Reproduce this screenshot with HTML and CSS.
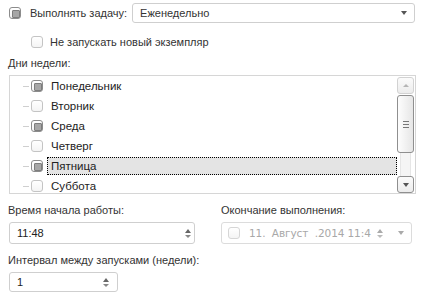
FILE: index.html
```html
<!DOCTYPE html>
<html lang="ru">
<head>
<meta charset="utf-8">
<link rel="stylesheet" href="styles.css">
</head>
<body>
<div class="form">
  <div class="row-top">
    <span class="cb checked"></span>
    <span class="lbl">Выполнять задачу:</span>
    <div class="combo">
      <span class="combo-text">Еженедельно</span>
      <span class="arrow-down"></span>
    </div>
  </div>
  <div class="row-sub">
    <span class="cb"></span>
    <span class="lbl">Не запускать новый экземпляр</span>
  </div>
  <div class="caption">Дни недели:</div>
  <div class="list">
    <div class="items">
      <div class="item"><span class="dash"></span><span class="cb checked"></span><span class="item-text">Понедельник</span></div>
      <div class="item"><span class="dash"></span><span class="cb"></span><span class="item-text">Вторник</span></div>
      <div class="item"><span class="dash"></span><span class="cb checked"></span><span class="item-text">Среда</span></div>
      <div class="item"><span class="dash"></span><span class="cb"></span><span class="item-text">Четверг</span></div>
      <div class="item selected"><span class="dash"></span><span class="cb checked"></span><span class="item-text">Пятница</span></div>
      <div class="item"><span class="dash"></span><span class="cb"></span><span class="item-text">Суббота</span></div>
    </div>
    <div class="scrollbar">
      <div class="sb-btn"><span class="sb-up"></span></div>
      <div class="sb-thumb"><span class="grip"></span><span class="grip"></span><span class="grip"></span></div>
      <div class="sb-track"></div>
      <div class="sb-btn dark"><span class="arrow-down"></span></div>
    </div>
  </div>
  <div class="cols">
    <div class="col">
      <div class="caption2">Время начала работы:</div>
      <div class="field time">
        <span class="field-text">11:48</span>
        <span class="spin"><span class="s-up"></span><span class="s-down"></span></span>
      </div>
    </div>
    <div class="col">
      <div class="caption2">Окончание выполнения:</div>
      <div class="field disabled">
        <span class="cb dis"></span>
        <span class="date-text">11.  Август  .2014 11:4</span>
        <span class="spin light"><span class="s-up"></span><span class="s-down"></span></span>
        <span class="arrow-down light"></span>
      </div>
    </div>
  </div>
  <div class="caption2 gap">Интервал между запусками (недели):</div>
  <div class="field small">
    <span class="field-text">1</span>
    <span class="spin"><span class="s-up"></span><span class="s-down"></span></span>
  </div>
</div>
</body>
</html>
```
FILE: styles.css
```css
* { box-sizing: border-box; }
html, body { margin: 0; padding: 0; background: #fff; }
body {
  width: 422px;
  height: 305px;
  overflow: hidden;
  font-family: "Liberation Sans", Arial, sans-serif;
  font-size: 11px;
  color: #333;
}
.form { padding: 0 6px 0 8px; }

.cb {
  display: inline-block;
  flex: none;
  width: 12px;
  height: 12px;
  border: 1px solid #c4c4c4;
  border-radius: 3px;
  background: linear-gradient(#fff, #f4f4f4);
  position: relative;
}
.cb.checked { border-color: #8c8c8c; }
.cb.checked::after {
  content: "";
  position: absolute;
  left: 2px; top: 2px;
  width: 6px; height: 6px;
  background: #a6a6a6;
  border: 1px solid #7d7d7d;
  border-radius: 1px;
}
.cb.dis { border-color: #d6d6d6; }

.row-top {
  display: flex;
  align-items: center;
  height: 20px;
  margin-top: 3px;
}
.row-top .cb { margin-left: 1px; margin-right: 9px; }
.row-top .lbl { white-space: nowrap; }
.combo {
  flex: 1;
  margin-left: 5px;
  margin-right: 1px;
  height: 20px;
  border: 1px solid #cfcfcf;
  border-radius: 3px;
  display: flex;
  align-items: center;
  padding: 0 7px 0 7px;
}
.combo-text { flex: 1; color: #333; }

.arrow-down {
  display: inline-block;
  width: 0; height: 0;
  border-left: 3.5px solid transparent;
  border-right: 3.5px solid transparent;
  border-top: 4px solid #555;
}
.arrow-down.light { border-top-color: #aaa; }

.row-sub {
  display: flex;
  align-items: center;
  height: 20px;
  margin-top: 9px;
}
.row-sub .cb { margin-left: 23px; margin-right: 7px; }

.caption {
  margin-top: 4px;
  line-height: 14px;
  height: 14px;
}

.list {
  margin-top: 5px;
  height: 119px;
  border: 1px solid #d6d6d6;
  margin-left: 1px;
  display: flex;
  position: relative;
}
.items { flex: 1; overflow: hidden; }
.item {
  height: 20px;
  display: flex;
  align-items: center;
  position: relative;
  color: #222;
  font-size: 11.5px;
}
.dash {
  width: 6px;
  height: 1px;
  background: #cfcfcf;
  margin-left: 13px;
  margin-right: 2px;
}
.item .cb { margin-right: 7px; }
.item-text { padding: 2px 2px 2px 1px; }
.item.selected::before {
  content: "";
  position: absolute;
  left: 37px; right: 0;
  top: 1px; bottom: 1px;
  background: #e4e4e4;
  border: 1px dotted #000;
}
.item.selected > * { position: relative; }

.scrollbar {
  width: 17px;
  margin: 1px 1px 0 0;
  display: flex;
  flex-direction: column;
}
.sb-btn {
  height: 17px;
  border: 1px solid #d2d2d2;
  border-radius: 3px;
  background: linear-gradient(#fbfbfb, #ececec);
  display: flex;
  align-items: center;
  justify-content: center;
}
.sb-btn.dark { border-color: #8f8f8f; }
.sb-up {
  width: 0; height: 0;
  border-left: 3px solid transparent;
  border-right: 3px solid transparent;
  border-bottom: 3px solid #b5b5b5;
}
.sb-thumb {
  margin-top: 1px;
  height: 58px;
  border: 1px solid #8f8f8f;
  border-radius: 3px;
  background: linear-gradient(90deg, #fdfdfd, #e6e6e6);
  display: flex;
  flex-direction: column;
  align-items: center;
  justify-content: center;
  gap: 2px;
}
.grip { width: 6px; height: 1px; background: #777; }
.sb-track {
  flex: 1;
  margin: 0 3px;
  border-left: 1px solid #e6e6e6;
  border-right: 1px solid #e6e6e6;
  background: #f5f5f5;
}

.cols {
  display: grid;
  grid-template-columns: 187px 191px;
  column-gap: 26px;
}
.caption2 {
  margin-top: 9px;
  line-height: 14px;
  height: 14px;
  white-space: nowrap;
}
.field {
  margin-top: 5px;
  margin-left: 1px;
  height: 22px;
  border: 1px solid #cfcfcf;
  border-radius: 3px;
  display: flex;
  align-items: center;
  padding: 0 8px 0 7px;
}
.field.time { padding-right: 3px; }
.field-text { flex: 1; color: #222; }
.spin {
  display: flex;
  flex-direction: column;
  gap: 2px;
  align-items: center;
}
.s-up {
  width: 0; height: 0;
  border-left: 3px solid transparent;
  border-right: 3px solid transparent;
  border-bottom: 4px solid #666;
}
.s-down {
  width: 0; height: 0;
  border-left: 3px solid transparent;
  border-right: 3px solid transparent;
  border-top: 3px solid #888;
}
.spin.light .s-up { border-bottom-color: #aaa; }
.spin.light .s-down { border-top-color: #bbb; }

.field.disabled {
  margin-left: 0;
  border-color: #dcdcdc;
  padding: 0 7px 0 6px;
}
.field.disabled .cb { margin-right: 9px; }
.date-text {
  flex: 1;
  white-space: pre;
  color: #a8a8a8;
  font-family: "DejaVu Sans", sans-serif;
  font-size: 10.5px;
  letter-spacing: -0.1px;
  margin-right: 3px;
}
.field.disabled .spin { margin-right: 15px; }

.field.small {
  width: 109px;
  height: 20px;
  padding-right: 8px;
}
```
